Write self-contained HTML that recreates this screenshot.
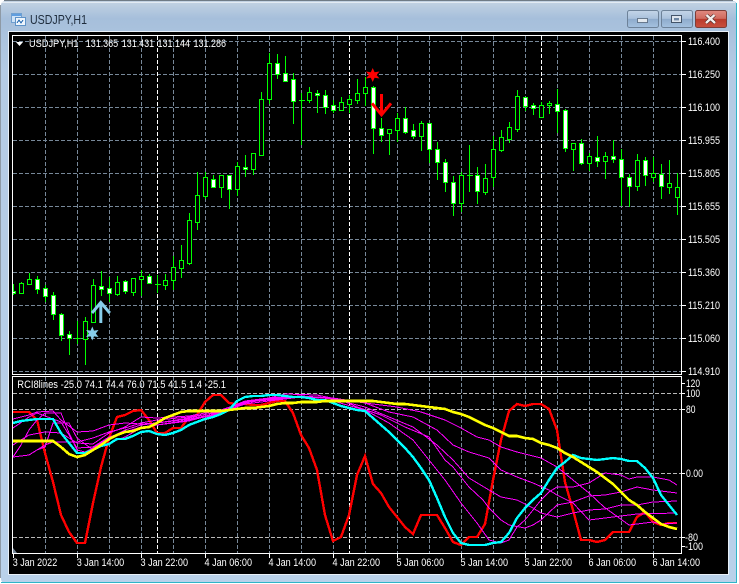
<!DOCTYPE html>
<html><head><meta charset="utf-8"><style>
html,body{margin:0;padding:0;background:#fff}
body{width:739px;height:584px;overflow:hidden;position:relative}
svg{display:block;position:absolute;left:0;top:0}
text{font-family:"Liberation Sans",sans-serif;font-size:11px;fill:#fff}
</style></head><body>
<svg width="739" height="584" viewBox="0 0 739 584">
<defs>
<linearGradient id="fr" x1="0" y1="0" x2="0" y2="1"><stop offset="0" stop-color="#c3d3e3"/><stop offset=".03" stop-color="#a6bfdb"/><stop offset=".12" stop-color="#b4cbe4"/><stop offset="1" stop-color="#b9d1ea"/></linearGradient>
<linearGradient id="bt" x1="0" y1="0" x2="0" y2="1"><stop offset="0" stop-color="#c4d5e8"/><stop offset=".48" stop-color="#a9c1dc"/><stop offset=".5" stop-color="#8eabcc"/><stop offset="1" stop-color="#a5c2e0"/></linearGradient>
<linearGradient id="cl" x1="0" y1="0" x2="0" y2="1"><stop offset="0" stop-color="#e08a80"/><stop offset=".48" stop-color="#cf6a5e"/><stop offset=".5" stop-color="#b93a2c"/><stop offset="1" stop-color="#c9503e"/></linearGradient>
<clipPath id="cm"><rect x="13" y="36" width="668" height="338"/></clipPath>
<clipPath id="cp"><rect x="13" y="377" width="668" height="176"/></clipPath>
</defs>
<!-- window -->
<rect x="1" y="1" width="736" height="582" rx="4" fill="url(#fr)"/>
<path d="M4 .5H733" stroke="#6f7b86" fill="none"/>
<path d="M.5 5V578" stroke="#8e9aa6" fill="none"/>
<path d="M2 2.500H735" stroke="#e3ebf3" fill="none"/>
<path d="M1 582.500H737M736.500 3V583" stroke="#2fb4c8" fill="none"/>
<rect x="8" y="31" width="721" height="544" fill="#e8f0f8"/>
<rect x="9" y="32" width="719" height="542" fill="#000"/>
<!-- title icon -->
<g shape-rendering="crispEdges">
<rect x="11.500" y="13.500" width="10" height="9" fill="#cfe3f7" stroke="#6f9fcf"/>
<rect x="12" y="14" width="9" height="2" fill="#5f9ee0"/>
<rect x="15.500" y="17.500" width="10" height="8" fill="#eef5fc" stroke="#5f93c8"/>
<path d="M17 23l2-3 2 3 2-3" stroke="#3a78b8" fill="none"/>
</g>
<text x="30" y="24" textLength="57" lengthAdjust="spacingAndGlyphs" style="font-size:12.500px;fill:#1e2c3c">USDJPY,H1</text>
<!-- buttons -->
<rect x="627.500" y="10.500" width="31" height="17" rx="2" fill="url(#bt)" stroke="#6d8299"/>
<rect x="637.500" y="18.500" width="10" height="4" fill="#e3e9ef" stroke="#44556a" stroke-width=".7"/>
<rect x="661.500" y="10.500" width="31" height="17" rx="2" fill="url(#bt)" stroke="#6d8299"/>
<rect x="671.500" y="15.500" width="10" height="7" fill="#dde5ee" stroke="#44556a"/>
<rect x="674" y="18" width="5" height="2.400" fill="#6d86a3"/>
<rect x="695.500" y="10.500" width="31" height="17" rx="2" fill="url(#cl)" stroke="#7d3d38"/>
<path d="M706.500 15l8.500 8M714.500 15l-8.500 8" stroke="#3e1f1e" stroke-width="3.600" fill="none"/>
<path d="M706.500 15l8.500 8M714.500 15l-8.500 8" stroke="#f4f0ee" stroke-width="2.400" fill="none"/>
<!-- grid -->
<g shape-rendering="crispEdges" fill="none" stroke-width="1">
<g clip-path="url(#cm)">
<path stroke="#778899" stroke-dasharray="4 2" d="M13 41.500H681M13 74.500H681M13 107.500H681M13 140.500H681M13 173.500H681M13 206.500H681M13 239.500H681M13 272.500H681M13 305.500H681M13 338.500H681M13 371.500H681"/>
<path stroke="#778899" stroke-dasharray="4 2" d="M45.500 36V374M77.500 36V374M109.500 36V374M141.500 36V374M173.500 36V374M205.500 36V374M237.500 36V374M269.500 36V374M301.500 36V374M333.500 36V374M365.500 36V374M397.500 36V374M429.500 36V374M461.500 36V374M493.500 36V374M525.500 36V374M557.500 36V374M589.500 36V374M621.500 36V374M653.500 36V374"/>
<path stroke="#fff" stroke-dasharray="4 2" d="M157.500 36V374M349.500 36V374M541.500 36V374"/>
</g>
<g clip-path="url(#cp)">
<path stroke="#778899" stroke-dasharray="4 2" d="M45.500 377V553M77.500 377V553M109.500 377V553M141.500 377V553M173.500 377V553M205.500 377V553M237.500 377V553M269.500 377V553M301.500 377V553M333.500 377V553M365.500 377V553M397.500 377V553M429.500 377V553M461.500 377V553M493.500 377V553M525.500 377V553M557.500 377V553M589.500 377V553M621.500 377V553M653.500 377V553"/>
<path stroke="#b8b8b8" stroke-dasharray="4 2" d="M13 393.500H681M13 409.500H681M13 473.500H681M13 537.500H681"/>
<path stroke="#fff" stroke-dasharray="4 2" d="M157.500 377V553M349.500 377V553M541.500 377V553"/>
</g>
</g>
<!-- candles -->
<g shape-rendering="crispEdges" clip-path="url(#cm)" stroke="#0f0" stroke-width="1">
<path fill="none" d="M13.500 284V295M21.500 282V293M29.500 273V285M37.500 276V294M45.500 285V302M53.500 292V320M61.500 313V341M69.500 331V355M77.500 321V344M85.500 317V365M93.500 279V323M101.500 271V296M109.500 277V302M117.500 276V296M125.500 280V294M133.500 278V296M141.500 270V296M149.500 274V284M157.500 275V293M165.500 274V290M173.500 256V290M181.500 245V278M189.500 213V265M197.500 172V230M205.500 172V199M213.500 175V187M221.500 175V198M229.500 175V209M237.500 162V196M245.500 155V177M253.500 153V175M261.500 92V155M269.500 53V104M277.500 54V79M285.500 56V82M293.500 73V124M301.500 93V145M309.500 87V103M317.500 90V113M325.500 90V114M333.500 100V113M341.500 97V110M349.500 95V113M357.500 79V104M365.500 77V106M373.500 86V154M381.500 118V142M389.500 129V155M397.500 113V142M405.500 107V134M413.500 124V139M421.500 121V151M429.500 123V163M437.500 142V180M445.500 159V192M453.500 176V216M461.500 172V212M469.500 145V192M477.500 167V204M485.500 164V195M493.500 136V187M501.500 130V152M509.500 122V143M517.500 90V132M525.500 97V111M533.500 103V115M541.500 102V117M549.500 101V114M557.500 89V133M565.500 109V152M573.500 143V171M581.500 139V165M589.500 153V171M597.500 136V167M605.500 152V179M613.500 140V163M621.500 149V206M629.500 174V207M637.500 154V191M645.500 157V186M653.500 157V182M661.500 164V199M669.500 160V194M677.500 173V215"/>
<path fill="none" d="M75 338.500h6M155 284.500h6M299 100.500h6M467 175.500h6"/>
<path fill="#000" d="M19.500 283.500h4v10h-4zM27.500 279.500h4v5h-4zM83.500 321.500h4v18h-4zM91.500 285.500h4v37h-4zM115.500 282.500h4v12h-4zM131.500 278.500h4v14h-4zM139.500 276.500h4v3h-4zM163.500 280.500h4v5h-4zM171.500 267.500h4v13h-4zM179.500 260.500h4v8h-4zM187.500 220.500h4v43h-4zM195.500 195.500h4v27h-4zM203.500 177.500h4v19h-4zM219.500 175.500h4v12h-4zM235.500 166.500h4v23h-4zM251.500 153.500h4v16h-4zM259.500 99.500h4v56h-4zM267.500 63.500h4v36h-4zM307.500 92.500h4v8h-4zM339.500 102.500h4v8h-4zM347.500 99.500h4v5h-4zM355.500 93.500h4v7h-4zM363.500 87.500h4v6h-4zM387.500 129.500h4v4h-4zM395.500 118.500h4v12h-4zM419.500 123.500h4v13h-4zM459.500 175.500h4v28h-4zM483.500 178.500h4v14h-4zM491.500 149.500h4v28h-4zM499.500 137.500h4v13h-4zM507.500 127.500h4v12h-4zM515.500 96.500h4v33h-4zM539.500 105.500h4v12h-4zM547.500 103.500h4v2h-4zM571.500 143.500h4v6h-4zM587.500 156.500h4v7h-4zM603.500 156.500h4v5h-4zM635.500 160.500h4v26h-4zM651.500 173.500h4v4h-4zM667.500 183.500h4v4h-4zM675.500 187.500h4v10h-4z"/>
<path fill="#fff" d="M11.500 291.500h4v2h-4zM35.500 279.500h4v10h-4zM43.500 288.500h4v8h-4zM51.500 295.500h4v19h-4zM59.500 314.500h4v21h-4zM67.500 334.500h4v4h-4zM99.500 286.500h4v3h-4zM107.500 288.500h4v5h-4zM123.500 281.500h4v10h-4zM147.500 276.500h4v7h-4zM211.500 179.500h4v8h-4zM227.500 175.500h4v14h-4zM243.500 167.500h4v2h-4zM275.500 63.500h4v11h-4zM283.500 73.500h4v8h-4zM291.500 79.500h4v22h-4zM315.500 93.500h4v2h-4zM323.500 95.500h4v12h-4zM331.500 105.500h4v5h-4zM371.500 87.500h4v41h-4zM379.500 128.500h4v7h-4zM403.500 118.500h4v14h-4zM411.500 130.500h4v6h-4zM427.500 123.500h4v26h-4zM435.500 149.500h4v13h-4zM443.500 162.500h4v20h-4zM451.500 182.500h4v21h-4zM475.500 175.500h4v16h-4zM523.500 97.500h4v9h-4zM531.500 105.500h4v3h-4zM555.500 104.500h4v7h-4zM563.500 110.500h4v38h-4zM579.500 143.500h4v20h-4zM595.500 157.500h4v4h-4zM611.500 156.500h4v3h-4zM619.500 159.500h4v18h-4zM627.500 177.500h4v9h-4zM643.500 160.500h4v15h-4zM659.500 174.500h4v12h-4z"/>
</g>
<!-- objects -->
<g fill="none" stroke-linejoin="miter">
<path d="M92 313l8.800-10.500 9 10.500" stroke="#87ceeb" stroke-width="3"/>
<path d="M100.800 303V323" stroke="#87ceeb" stroke-width="3"/>
<path d="M381.500 94V114" stroke="#f00" stroke-width="3"/>
<path d="M372 103.300l9.500 11.500 9.500-11.500" stroke="#f00" stroke-width="3"/>
</g>
<polygon fill="#87ceeb" points="92.300,326.500 94,330.600 98.500,330 95.800,333.500 98.500,337 94,336.400 92.300,340.500 90.600,336.400 86.100,337 88.800,333.500 86.100,330 90.600,330.600"/>
<polygon fill="#f00" points="372.700,68 374.600,72.300 379.500,71.500 376.500,75 379.500,78.500 374.600,77.700 372.700,82 370.800,77.700 365.900,78.500 368.900,75 365.900,71.500 370.800,72.300"/>
<!-- indicator -->
<g clip-path="url(#cp)" fill="none" shape-rendering="crispEdges">
<polyline stroke="#f00" stroke-width="2.400" points="13,412 29,412 37,420 45,453 53,482 61,515 69,532 77,543 85,543 93,503 101,467 109,438 117,417 125,415 133,411 141,410 149,420 157,433 165,433 173,428 181,428 189,417 197,415 205,402 213,395 221,395 229,403 237,404 245,404 253,405 261,405 269,403 277,401 285,401 293,413 301,435 309,448 317,470 325,515 333,541 341,537 349,515 357,475 365,456 373,484 381,493 389,507 397,517 405,527 413,534 421,515 429,515 437,515 445,528 453,542 461,545 469,537 477,537 485,524 493,480 501,440 509,411 517,404 525,406 533,404 541,404 549,409 557,430 565,482 573,510 581,540 589,540 597,542 605,540 613,532 621,532 629,532 637,517 645,512 653,522 661,525 669,523 677,523"/>
<g stroke="#f0f" stroke-width="1">
<polyline points="13,419 29,415 37,412 53,411 61,420 77,432 93,431 109,425 125,423 141,424 157,423 189,419 221,413 245,402 269,400 301,396 333,398 365,403 397,407 421,412 445,420 461,428 477,437 489,440 501,447 517,452 541,458 557,467 573,480 589,493 604,507 622,520 629,525 653,522 661,524 677,523"/>
<polyline points="13,457 29,455 37,450 45,445 53,442 77,442 93,438 109,432 125,428 141,423 157,420 189,417 221,412 245,404 269,401 301,397 333,398 365,403 389,412 413,417 437,430 453,445 469,452 489,458 501,470 517,477 533,483 549,490 557,495 573,503 589,520 605,518 621,516 637,514 677,513"/>
<polyline points="13,445 29,435 45,432 61,433 77,443 93,444 109,433 125,427 141,417 157,418 189,416 221,410 245,402 269,398 301,396 333,399 365,407 389,417 413,427 437,445 453,460 469,478 489,490 501,497 517,500 533,508 541,513 557,517 573,513 589,510 605,509 621,505 637,505 653,502 677,501"/>
<polyline points="13,457 21,445 29,430 37,420 45,413 61,413 69,433 77,450 85,452 93,448 109,438 125,430 141,425 157,423 189,418 221,411 245,401 269,398 285,394 317,395 341,400 357,407 381,415 405,427 429,437 445,460 453,467 469,487 483,500 489,508 501,520 509,525 525,528 533,525 541,520 557,505 573,502 589,496 605,495 621,492 637,487 653,490 677,493"/>
<polyline points="13,457 29,455 37,450 45,447 53,423 69,423 77,438 93,450 109,443 125,437 141,428 157,425 189,421 221,412 245,403 269,399 301,397 333,401 365,410 389,423 413,440 429,460 445,480 461,503 477,523 489,540 501,543 509,540 517,527 525,520 533,510 541,500 549,492 557,487 573,487 589,483 605,473 621,475 629,479 637,477 653,477 669,480 677,485"/>
<polyline points="13,428 29,417 37,413 61,422 77,448 93,447 109,437 125,432 141,427 157,425 189,420 221,414 245,403"/>
</g>
<polyline stroke="#0ff" stroke-width="2.400" points="13,423 21,421 29,420 37,419 45,419 53,419 61,433 69,443 77,453 85,453 93,450 101,446 109,444 117,439 125,439 133,436 141,432 149,431 157,434 165,435 173,433 181,430 189,425 197,422 205,419 213,417 221,414 229,410 237,401 245,397 253,396 261,396 269,395 277,395 285,396 293,397 301,397 309,398 317,400 325,400 333,403 341,406 349,408 357,410 365,411 373,418 381,425 389,432 397,440 405,448 413,457 421,468 429,480 437,498 445,517 453,533 461,543 469,545 477,545 485,545 493,543 501,542 509,533 517,518 525,508 533,500 541,493 549,480 557,468 565,462 573,455 581,458 589,459 597,460 605,459 613,458 621,459 629,461 637,461 645,468 653,478 661,495 669,505 677,515"/>
<polyline stroke="#ff0" stroke-width="2.600" points="13,441 53,441 61,447 69,454 77,457 85,455 93,450 101,445 109,439 117,435 125,432 133,431 141,428 149,427 157,423 165,418 173,415 181,412 189,411 221,411 229,410 237,409 245,408 253,408 261,407 269,406 277,404 285,403 293,403 301,402 317,402 325,401 365,401 373,401 381,402 389,403 397,404 405,404 413,405 421,406 429,407 437,408 445,409 453,412 461,414 469,417 477,421 485,425 493,428 501,432 509,436 517,436 525,438 533,439 541,443 549,445 557,448 565,453 573,457 581,462 589,467 597,472 605,478 613,484 621,492 629,500 637,505 645,512 653,518 661,524 669,527 677,529"/>
</g>
<!-- frames -->
<g shape-rendering="crispEdges" fill="none" stroke="#fff">
<path d="M12.500 35.500H681.500V374.500H12.500Z"/>
<path d="M12.500 376.500H681.500V553.500H12.500Z"/>
<path d="M682 41.500h4M682 74.500h4M682 107.500h4M682 140.500h4M682 173.500h4M682 206.500h4M682 239.500h4M682 272.500h4M682 305.500h4M682 338.500h4M682 371.500h4"/>
<path d="M682 383.500h3M682 393.500h3M682 409.500h3M682 473.500h3M682 537.500h3M682 546.500h3"/>
<path d="M13.500 554v4M77.500 554v4M141.500 554v4M205.500 554v4M269.500 554v4M333.500 554v4M397.500 554v4M461.500 554v4M525.500 554v4M589.500 554v4M653.500 554v4"/>
</g>
<polygon points="16,42 23,42 19.500,46" fill="#fff"/>
<polygon points="13,553 13,548 17,553" fill="#778899"/>
<!-- texts -->
<text x="29" y="47" textLength="49.500" lengthAdjust="spacingAndGlyphs">USDJPY,H1</text>
<text x="85.700" y="47" textLength="32.500" lengthAdjust="spacingAndGlyphs">131.365</text>
<text x="121.700" y="47" textLength="32.500" lengthAdjust="spacingAndGlyphs">131.431</text>
<text x="157.500" y="47" textLength="32.500" lengthAdjust="spacingAndGlyphs">131.144</text>
<text x="193.500" y="47" textLength="32.500" lengthAdjust="spacingAndGlyphs">131.286</text>
<text x="17.300" y="388" textLength="208.700" lengthAdjust="spacingAndGlyphs">RCI8lines -25.0 74.1 74.4 76.0 71.5 41.5 1.4 -25.1</text>
<g>
<text x="688" y="45" textLength="32" lengthAdjust="spacingAndGlyphs">116.400</text>
<text x="688" y="78" textLength="32" lengthAdjust="spacingAndGlyphs">116.250</text>
<text x="688" y="111" textLength="32" lengthAdjust="spacingAndGlyphs">116.100</text>
<text x="688" y="144" textLength="32" lengthAdjust="spacingAndGlyphs">115.955</text>
<text x="688" y="177" textLength="32" lengthAdjust="spacingAndGlyphs">115.805</text>
<text x="688" y="210" textLength="32" lengthAdjust="spacingAndGlyphs">115.655</text>
<text x="688" y="243" textLength="32" lengthAdjust="spacingAndGlyphs">115.505</text>
<text x="688" y="276" textLength="32" lengthAdjust="spacingAndGlyphs">115.360</text>
<text x="688" y="309" textLength="32" lengthAdjust="spacingAndGlyphs">115.210</text>
<text x="688" y="342" textLength="32" lengthAdjust="spacingAndGlyphs">115.060</text>
<text x="688" y="375" textLength="32" lengthAdjust="spacingAndGlyphs">114.910</text>
<text x="686" y="387" textLength="14" lengthAdjust="spacingAndGlyphs">120</text>
<text x="686" y="397" textLength="14" lengthAdjust="spacingAndGlyphs">100</text>
<text x="686" y="413" textLength="9.500" lengthAdjust="spacingAndGlyphs">80</text>
<text x="686" y="477" textLength="17" lengthAdjust="spacingAndGlyphs">0.00</text>
<text x="685" y="541" textLength="13" lengthAdjust="spacingAndGlyphs">-80</text>
<text x="685" y="550" textLength="18" lengthAdjust="spacingAndGlyphs">-100</text>
</g>
<g>
<text x="12.700" y="566" textLength="44.500" lengthAdjust="spacingAndGlyphs">3 Jan 2022</text>
<text x="76.700" y="566" textLength="47.500" lengthAdjust="spacingAndGlyphs">3 Jan 14:00</text>
<text x="140.500" y="566" textLength="47.500" lengthAdjust="spacingAndGlyphs">3 Jan 22:00</text>
<text x="204.500" y="566" textLength="47.500" lengthAdjust="spacingAndGlyphs">4 Jan 06:00</text>
<text x="268.500" y="566" textLength="47.500" lengthAdjust="spacingAndGlyphs">4 Jan 14:00</text>
<text x="332.500" y="566" textLength="47.500" lengthAdjust="spacingAndGlyphs">4 Jan 22:00</text>
<text x="396.500" y="566" textLength="47.500" lengthAdjust="spacingAndGlyphs">5 Jan 06:00</text>
<text x="460.500" y="566" textLength="47.500" lengthAdjust="spacingAndGlyphs">5 Jan 14:00</text>
<text x="524.500" y="566" textLength="47.500" lengthAdjust="spacingAndGlyphs">5 Jan 22:00</text>
<text x="588.500" y="566" textLength="47.500" lengthAdjust="spacingAndGlyphs">6 Jan 06:00</text>
<text x="652.500" y="566" textLength="47.500" lengthAdjust="spacingAndGlyphs">6 Jan 14:00</text>
</g>
</svg>
</body></html>
